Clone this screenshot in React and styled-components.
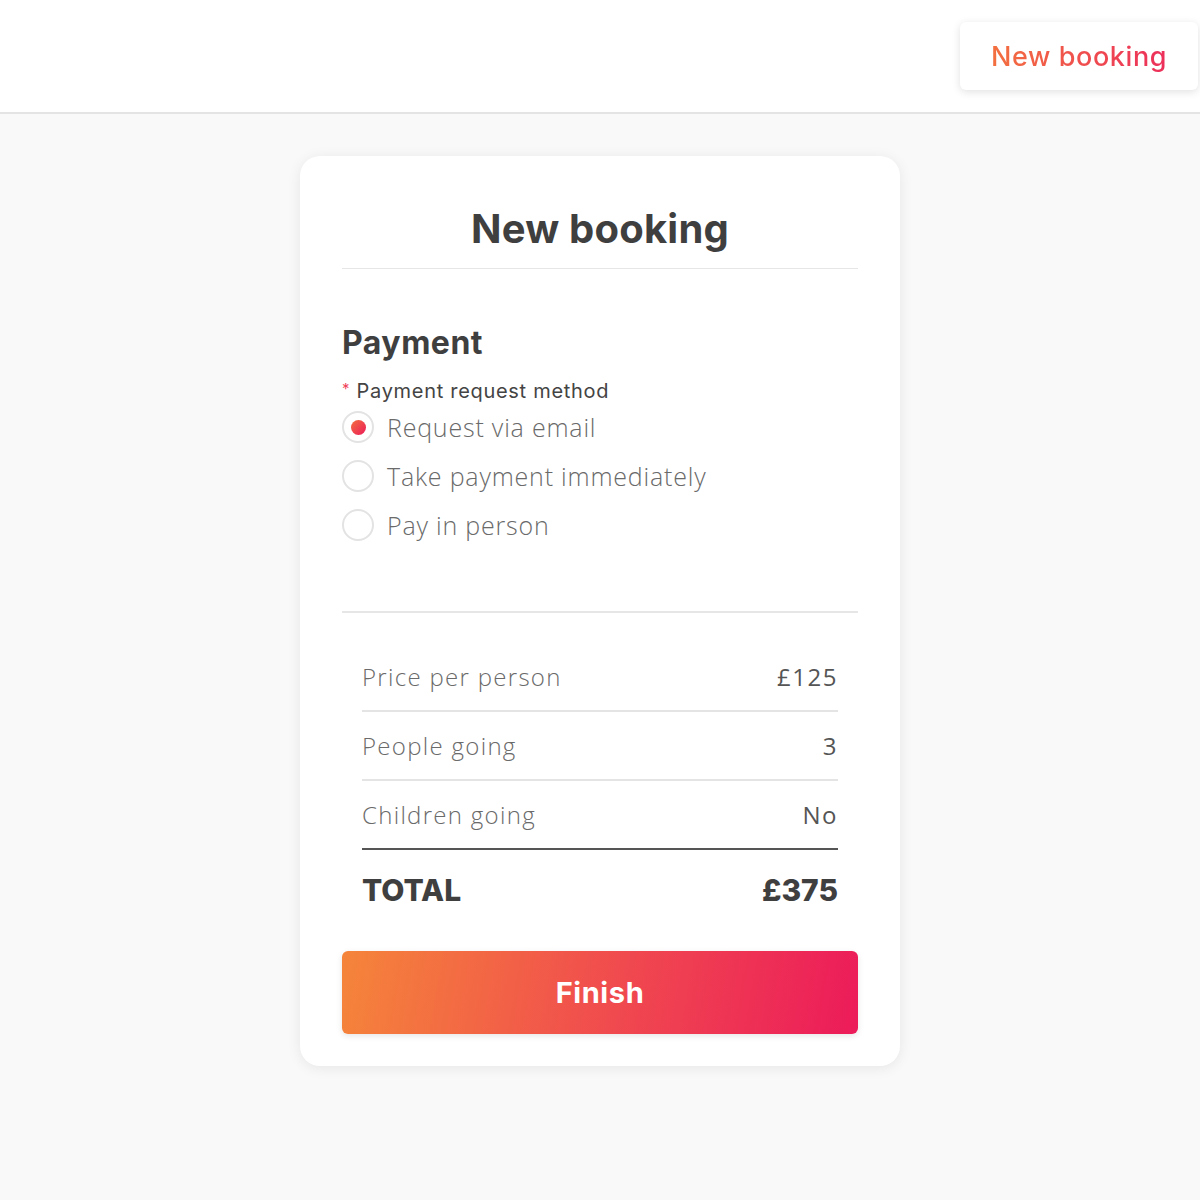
import React from "react";
import styled, { createGlobalStyle } from "styled-components";

const GlobalStyle = createGlobalStyle`
	* { box-sizing: border-box; }
	body {
		margin: 0;
		background: #f9f9f9;
		font-family: Inter, "Open Sans", sans-serif;
		color: #444;
	}
`;

const rows = [
	{ label: "Price per person", value: "£125" },
	{ label: "People going", value: "3" },
	{ label: "Children going", value: "No" },
];

const options = ["Request via email", "Take payment immediately", "Pay in person"];

const App = () => {
	return (
		<>
			<GlobalStyle />
			<Header>
				<HeaderButton>
					<GradientText>New booking</GradientText>
				</HeaderButton>
			</Header>
			<Main>
				<Card>
					<Title>New booking</Title>
					<Section>
						<SectionTitle>Payment</SectionTitle>
						<Label>
							<span>*</span> Payment request method
						</Label>
						<RadioList>
							{options.map((o, i) => (
								<RadioRow key={o}>
									<Radio $checked={i === 0} />
									<RadioText>{o}</RadioText>
								</RadioRow>
							))}
						</RadioList>
					</Section>
					<Summary>
						{rows.map((r, i) => (
							<SummaryRow key={r.label} $last={i === rows.length - 1}>
								<RowLabel>{r.label}</RowLabel>
								<RowValue>{r.value}</RowValue>
							</SummaryRow>
						))}
						<TotalRow>
							<span>TOTAL</span>
							<span>£375</span>
						</TotalRow>
					</Summary>
					<FinishButton>Finish</FinishButton>
				</Card>
			</Main>
		</>
	);
};

const Header = styled.header`
	height: 114px;
	background: #fff;
	border-bottom: 2px solid #e4e4e4;
	display: flex;
	justify-content: flex-end;
	align-items: flex-start;
	padding: 22px 2px 0 0;
`;

const HeaderButton = styled.button`
	width: 238px;
	height: 68px;
	border: none;
	border-radius: 6px;
	background: #fff;
	box-shadow: 0 2px 8px rgba(0, 0, 0, 0.12);
	font-family: Inter, sans-serif;
	font-size: 27px;
	font-weight: 500;
	letter-spacing: 0.6px;
	cursor: pointer;
`;

const GradientText = styled.span`
	background: linear-gradient(90deg, #f3703f, #ec2f5b);
	-webkit-background-clip: text;
	background-clip: text;
	color: transparent;
`;

const Main = styled.main`
	display: flex;
	justify-content: center;
	padding: 42px 0 134px;
`;

const Card = styled.div`
	width: 600px;
	background: #fff;
	border-radius: 20px;
	box-shadow: 0 2px 14px rgba(0, 0, 0, 0.08);
	padding: 48px 42px 32px;
`;

const Title = styled.h1`
	margin: 0;
	text-align: center;
	font-size: 40px;
	font-weight: 700;
	letter-spacing: 0.2px;
	color: #3f3f3f;
	padding-bottom: 15px;
	border-bottom: 1px solid #e6e6e6;
`;

const Section = styled.section`
	padding: 54px 0 70px;
	border-bottom: 2px solid #e6e6e6;
`;

const SectionTitle = styled.h2`
	margin: 0 0 17px;
	font-size: 32px;
	font-weight: 700;
	letter-spacing: 0.5px;
	color: #3f3f3f;
`;

const Label = styled.div`
	font-size: 20px;
	font-weight: 400;
	letter-spacing: 0.7px;
	color: #444;
	margin-bottom: 8px;

	span {
		color: #f0445a;
		font-size: 15px;
		vertical-align: top;
	}
`;

const RadioList = styled.div`
	display: flex;
	flex-direction: column;
	gap: 17px;
`;

const RadioRow = styled.label`
	display: flex;
	align-items: center;
	gap: 13px;
	height: 32px;
`;

const Radio = styled.span`
	width: 32px;
	height: 32px;
	border-radius: 50%;
	border: 2px solid #e3e3e3;
	display: flex;
	align-items: center;
	justify-content: center;

	&::after {
		content: "";
		display: ${(p) => (p.$checked ? "block" : "none")};
		width: 15px;
		height: 15px;
		border-radius: 50%;
		background: linear-gradient(135deg, #f3703f, #ec1b5a);
	}
`;

const RadioText = styled.span`
	font-family: "Open Sans", sans-serif;
	font-size: 25px;
	font-weight: 300;
	color: #6a6a6a;
	letter-spacing: 0.8px;
`;

const Summary = styled.div`
	padding: 30px 20px 21px;
`;

const SummaryRow = styled.div`
	display: flex;
	justify-content: space-between;
	align-items: center;
	height: 69px;
	border-bottom: ${(p) => (p.$last ? "2px solid #555" : "2px solid #e4e4e4")};
`;

const RowLabel = styled.span`
	font-family: "Open Sans", sans-serif;
	font-size: 24px;
	font-weight: 300;
	color: #6a6a6a;
	letter-spacing: 1.3px;
`;

const RowValue = styled.span`
	font-family: "Open Sans", sans-serif;
	font-size: 24px;
	font-weight: 400;
	color: #555;
	letter-spacing: 1.5px;
`;

const TotalRow = styled.div`
	display: flex;
	justify-content: space-between;
	align-items: center;
	height: 80px;
	font-size: 30px;
	font-weight: 800;
	color: #3f3f3f;
`;

const FinishButton = styled.button`
	display: block;
	width: 100%;
	height: 83px;
	border: none;
	border-radius: 6px;
	background: linear-gradient(100deg, #f5853a 0%, #f0484f 55%, #ec1b5a 100%);
	box-shadow: 0 2px 6px rgba(0, 0, 0, 0.1);
	color: #fff;
	font-family: Inter, sans-serif;
	font-size: 29px;
	font-weight: 700;
	letter-spacing: 0.6px;
	cursor: pointer;
`;

export default App;
